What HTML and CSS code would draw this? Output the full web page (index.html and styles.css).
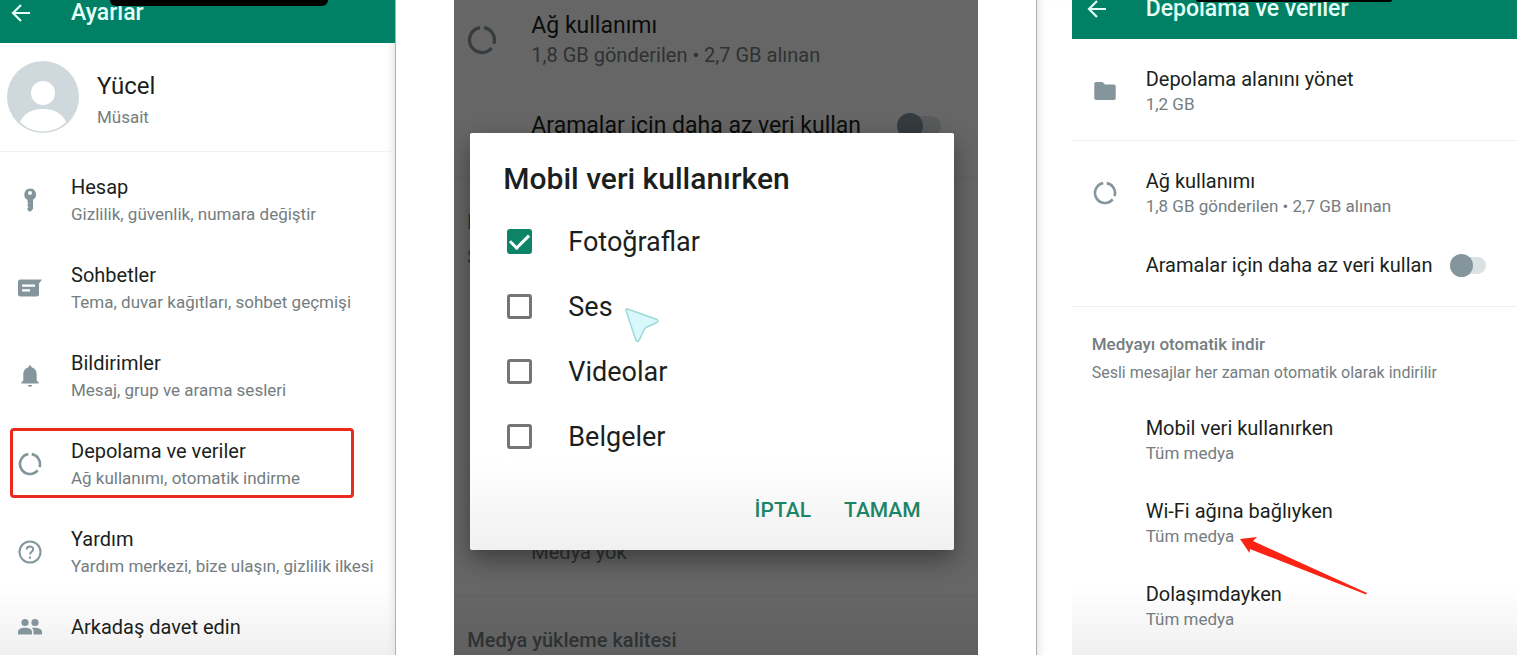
FILE: index.html
```
<!DOCTYPE html>
<html lang="tr">

<head>
    <meta charset="utf-8">
    <meta name="viewport" content="width=device-width, initial-scale=1.0">
    <title>Ayarlar</title>
    <link rel="stylesheet" href="styles.css">
</head>

<body>

    <svg class="symbols" aria-hidden="true">
        <symbol id="back" viewBox="0 0 24 24">
            <path d="M21 12H4M12 4l-8 8 8 8" fill="none" stroke="currentColor" stroke-width="2.2" />
        </symbol>
        <symbol id="data" viewBox="0 0 24 24">
            <path d="M13.74 2.15A10 10 0 0 1 21.51 15.09M19.66 18.43A10 10 0 1 1 10.26 2.15" fill="none" stroke="currentColor" stroke-width="2.6" />
        </symbol>
    </svg>

    <main class="screens">

        <section class="screen settings">
            <header class="bar">
                <button class="back" aria-label="Geri"><svg><use href="#back" /></svg></button>
                <h1>Ayarlar</h1>
                <span class="notch"></span>
            </header>

            <a class="profile" href="#">
                <svg class="avatar" viewBox="0 0 72 72">
                    <circle cx="36" cy="36" r="36" fill="#cfd8dc" />
                    <circle cx="36" cy="32" r="12" fill="#fff" />
                    <path d="M13 61C17 52 25 48 36 48s19 4 23 13C53 67 45 70.500 36 70.500S19 67 13 61z" fill="#fff" />
                </svg>
                <span class="who">
                    <strong>Yücel</strong>
                    <small>Müsait</small>
                </span>
            </a>

            <nav class="menu">
                <a class="item" href="#">
                    <svg class="icon" viewBox="0 0 24 24">
                        <path fill="currentColor" fill-rule="evenodd" d="M12 .5a6 6 0 0 1 3 11.200V21l-2.500 2.500h-1.500L9.500 22v-2l1-1-1-1v-1.500l1-1-1-1v-2.700A6 6 0 0 1 12 .5zM12 3a2 2 0 1 0 0 4 2 2 0 0 0 0-4z" />
                    </svg>
                    <span class="text"><b>Hesap</b><small>Gizlilik, güvenlik, numara değiştir</small></span>
                </a>
                <a class="item" href="#">
                    <svg class="icon" viewBox="0 0 24 24">
                        <path fill="currentColor" fill-rule="evenodd" d="M2.500 3.500H24L21 7.500V18a2.500 2.500 0 0 1-2.500 2.500h-16A2.500 2.500 0 0 1 0 18V6a2.500 2.500 0 0 1 2.500-2.500zM4 8.500v2.300h13V8.500zM4 13.200v2.300h8v-2.300z" />
                    </svg>
                    <span class="text"><b>Sohbetler</b><small>Tema, duvar kağıtları, sohbet geçmişi</small></span>
                </a>
                <a class="item" href="#">
                    <svg class="icon" viewBox="0 0 24 24">
                        <path fill="currentColor" d="M12 1.500c1 0 1.500.7 1.500 1.700 3.300.8 5.200 3.400 5.200 6.800v6.500l2 2V19.500H3.300V18.500l2-2V10c0-3.400 1.900-6 5.200-6.800 0-1 .5-1.700 1.500-1.700zM9.800 21h4.400c0 1.200-1 1.800-2.200 1.800S9.800 22.200 9.800 21z" />
                    </svg>
                    <span class="text"><b>Bildirimler</b><small>Mesaj, grup ve arama sesleri</small></span>
                </a>
                <a class="item marked" href="#">
                    <svg class="icon"><use href="#data" /></svg>
                    <span class="text"><b>Depolama ve veriler</b><small>Ağ kullanımı, otomatik indirme</small></span>
                </a>
                <a class="item" href="#">
                    <svg class="icon" viewBox="0 0 24 24" fill="none" stroke="currentColor" stroke-width="2">
                        <circle cx="12" cy="12" r="10.500" />
                        <path d="M8.800 9.500c0-4 6.400-4 6.400-.2 0 2.400-3.200 2.700-3.200 5.200M12 16.500v2.200" />
                    </svg>
                    <span class="text"><b>Yardım</b><small>Yardım merkezi, bize ulaşın, gizlilik ilkesi</small></span>
                </a>
                <a class="item" href="#">
                    <svg class="icon" viewBox="0 0 24 24" fill="currentColor">
                        <circle cx="7" cy="7.500" r="3.600" />
                        <circle cx="17" cy="7.500" r="3.600" />
                        <path d="M0 19.500v-2.700C0 14 3.500 12.800 7 12.800s7 1.200 7 4v2.700zM15.500 19.500v-3c0-1.400-.6-2.500-1.600-3.400 4-.8 10.100.3 10.100 3.700v2.700z" />
                    </svg>
                    <span class="text"><b>Arkadaş davet edin</b></span>
                </a>
            </nav>
        </section>

        <section class="screen dimmed">
            <div class="group">
                <div class="row">
                    <svg class="icon"><use href="#data" /></svg>
                    <p class="text"><b>Ağ kullanımı</b><small>1,8 GB gönderilen • 2,7 GB alınan</small></p>
                </div>
                <div class="row switch-row">
                    <label for="calls-back">Aramalar için daha az veri kullan</label>
                    <input class="switch" type="checkbox" id="calls-back">
                </div>
            </div>
            <div class="group">
                <h2>Medyayı otomatik indir</h2>
                <p class="note">Sesli mesajlar</p>
                <div class="row last">
                    <p class="text"><b>Dolaşımdayken</b><small>Medya yok</small></p>
                </div>
            </div>
            <div class="group">
                <h2>Medya yükleme kalitesi</h2>
            </div>

            <div class="backdrop"></div>

            <form class="dialog" role="dialog" aria-labelledby="dialog-title">
                <h2 id="dialog-title">Mobil veri kullanırken</h2>
                <label class="option"><input type="checkbox" checked>Fotoğraflar</label>
                <label class="option"><input type="checkbox">Ses</label>
                <label class="option"><input type="checkbox">Videolar</label>
                <label class="option"><input type="checkbox">Belgeler</label>
                <div class="actions">
                    <button type="button">İPTAL</button>
                    <button type="button">TAMAM</button>
                </div>
                <svg class="cursor" viewBox="0 0 36 36">
                    <path d="M2 3.500Q1.500 1.500 3.500 2L33 12.500Q35 14 33 15.500L23 20Q21 21 20 23L15 33.500Q13.500 35.500 12 33.500z" fill="#d8f8fc" stroke="#9fd8d8" stroke-width="1.500" />
                </svg>
            </form>
        </section>

        <section class="frame">
            <div class="screen storage">
                <header class="bar">
                    <button class="back" aria-label="Geri"><svg><use href="#back" /></svg></button>
                    <h1>Depolama ve veriler</h1>
                    <span class="notch"></span>
                </header>
                <div class="group">
                    <div class="row">
                        <svg class="icon" viewBox="0 0 24 24">
                            <path fill="currentColor" d="M3 3h6.500l2.500 2.500h9A1.700 1.700 0 0 1 22.700 7.200v12A1.700 1.700 0 0 1 21 21H3a1.700 1.700 0 0 1-1.700-1.700V4.700A1.700 1.700 0 0 1 3 3z" />
                        </svg>
                        <p class="text"><b>Depolama alanını yönet</b><small>1,2 GB</small></p>
                    </div>
                </div>
                <div class="group">
                    <div class="row">
                        <svg class="icon"><use href="#data" /></svg>
                        <p class="text"><b>Ağ kullanımı</b><small>1,8 GB gönderilen • 2,7 GB alınan</small></p>
                    </div>
                    <div class="row switch-row">
                        <label for="calls">Aramalar için daha az veri kullan</label>
                        <input class="switch" type="checkbox" id="calls">
                    </div>
                </div>
                <div class="group media">
                    <h2>Medyayı otomatik indir</h2>
                    <p class="note">Sesli mesajlar her zaman otomatik olarak indirilir</p>
                    <div class="row">
                        <p class="text"><b>Mobil veri kullanırken</b><small>Tüm medya</small></p>
                    </div>
                    <div class="row">
                        <p class="text"><b>Wi-Fi ağına bağlıyken</b><small>Tüm medya</small></p>
                        <svg class="pointer" viewBox="0 0 128 58">
                            <path d="M0 2L17 0 13 4 127 56 126 57.500 10 12 9.500 16z" fill="#fb2314" />
                        </svg>
                    </div>
                    <div class="row">
                        <p class="text"><b>Dolaşımdayken</b><small>Tüm medya</small></p>
                    </div>
                </div>
            </div>
        </section>

    </main>

</body>

</html>
```
FILE: styles.css
```
* {
    box-sizing: border-box;
}

body {
    margin: 0;
    background: #fff;
    color: #1b1f20;
    font-family: Roboto, "Liberation Sans", sans-serif;
}

h1, h2, p {
    margin: 0;
}

h1, h2 {
    font-weight: 500;
}

a {
    color: inherit;
    text-decoration: none;
}

button {
    padding: 0;
    border: 0;
    background: none;
    color: inherit;
    font-family: inherit;
}

.symbols {
    display: none;
}

.screens {
    display: grid;
    grid-template-columns: 396fr 523fr 481fr;
    column-gap: 58px;
    height: 100vh;
    overflow: hidden;
}

.screen {
    position: relative;
    overflow: hidden;
    background: linear-gradient(to top, #e8e8e8, #fff 100px);
}

.settings {
    border-right: 1px solid #b0b0b0;
    box-shadow: inset -8px 0 8px -6px #e4e4e4;
}

/* top bar */
.bar {
    position: relative;
    display: flex;
    align-items: center;
    height: 43px;
    padding: 0 0 17px 9px;
    background: #008065;
    color: #e4fff8;
}

.bar h1 {
    font-size: 23px;
    line-height: 26px;
}

.back {
    width: 24px;
    height: 24px;
    margin-right: 38px;
}

.back svg {
    display: block;
    width: 24px;
    height: 24px;
}

.notch {
    position: absolute;
    top: 0;
    left: 110px;
    width: 218px;
    height: 6px;
    border-radius: 0 0 20px 20px;
    background: #000;
}

/* profile and menu */
.profile {
    display: flex;
    align-items: center;
    gap: 18px;
    height: 109px;
    padding-left: 7px;
    border-bottom: 1px solid #f0f0f0;
}

.avatar {
    width: 72px;
    height: 72px;
}

.who {
    padding-top: 5px;
}

.who strong {
    display: block;
    margin-bottom: 4px;
    font-size: 24px;
    font-weight: 400;
    line-height: 30px;
}

small {
    display: block;
    color: #747d80;
    font-size: 17px;
    line-height: 24px;
}

b {
    display: block;
    font-size: 19px;
    font-weight: 400;
    line-height: 26px;
}

.menu {
    display: grid;
    gap: 18px;
    padding: 12px 10px;
}

.item {
    display: flex;
    align-items: center;
    gap: 29px;
    padding: 7px 0 5px 5px;
    border: 3px solid transparent;
    border-radius: 4px;
    white-space: nowrap;
}

.item b {
    font-size: 20px;
}

.item small {
    margin-top: 2px;
}

.marked {
    margin-right: 31px;
    border-color: #ea2a1f;
}

.icon {
    flex: none;
    width: 24px;
    height: 24px;
    color: #84959c;
}

/* storage screen */
.frame {
    padding-left: 35px;
    border-left: 1px solid #b0b0b0;
    box-shadow: inset 8px 0 8px -6px #e4e4e4;
}

.storage {
    height: 100%;
}

.storage .bar {
    height: 39px;
    padding: 0 0 22px 13px;
}

.storage .bar h1 {
    white-space: nowrap;
}

.storage .back {
    margin-right: 37px;
}

.storage .notch {
    left: 124px;
    width: 196px;
    height: 2px;
}

.storage b,
.switch-row {
    font-size: 20px;
    line-height: 26px;
}

.group {
    padding: 27px 20px 24px;
    border-bottom: 1px solid #f0f0f0;
}

.group:last-child {
    border: 0;
}

.row {
    position: relative;
    display: flex;
    align-items: center;
    gap: 29px;
    padding-left: 54px;
    white-space: nowrap;
}

.row:has(.icon) {
    padding-left: 1px;
}

.switch-row {
    gap: 18px;
    margin: 34px 0 4px;
}

.switch {
    position: relative;
    flex: none;
    width: 36px;
    height: 17px;
    margin: 0;
    border-radius: 12px;
    background: #dbe2e3;
    appearance: none;
}

.switch::before {
    content: "";
    position: absolute;
    top: -3px;
    left: 0;
    width: 23px;
    height: 23px;
    border-radius: 50%;
    background: #84959c;
}

.group h2 {
    color: #747d80;
    font-size: 17px;
    line-height: 24px;
}

.media {
    padding-top: 25px;
}

.note {
    margin: 5px 0 30px;
    color: #747d80;
    font-size: 16px;
    line-height: 24px;
    white-space: nowrap;
}

.media .row {
    margin-bottom: 33px;
}

.pointer {
    position: absolute;
    top: 39px;
    left: 148px;
    width: 128px;
    height: 58px;
}

/* screen behind the dialog */
.dimmed b,
.dimmed .switch-row {
    font-size: 23px;
    line-height: 30px;
}

.dimmed small,
.dimmed .note,
.dimmed .group h2 {
    font-size: 20px;
    line-height: 28px;
}

.dimmed .group {
    padding: 30px 13px 29px;
}

.dimmed .group:first-child {
    padding-top: 11px;
}

.dimmed .row {
    gap: 34px;
    padding-left: 64px;
}

.dimmed .row:has(.icon) {
    padding-left: 0;
}

.dimmed .icon {
    width: 30px;
    height: 30px;
}

.dimmed .switch-row {
    gap: 36px;
    margin: 42px 0 7px;
}

.dimmed .note {
    margin: 7px 0 0;
}

.dimmed .last {
    margin-top: 237px;
}

.dimmed .switch {
    width: 44px;
    height: 20px;
}

.dimmed .switch::before {
    width: 26px;
    height: 26px;
}

.backdrop {
    position: absolute;
    inset: 0;
    background: rgba(0, 0, 0, .6);
}

/* dialog */
.dialog {
    position: absolute;
    top: 133px;
    left: 16px;
    right: 24px;
    padding: 28px 33px 27px;
    border-radius: 2px;
    background: linear-gradient(to top, #f0f0f0, #fff 90px);
    box-shadow: 0 10px 24px rgba(0, 0, 0, .4);
}

.dialog h2 {
    margin-bottom: 12px;
    font-size: 30px;
    line-height: 36px;
}

.option {
    display: flex;
    align-items: center;
    gap: 36px;
    height: 65px;
    padding-left: 4px;
    font-size: 27px;
}

.option input {
    display: grid;
    place-items: center;
    width: 25px;
    height: 25px;
    margin: 0;
    border: 3px solid #757575;
    border-radius: 3px;
    appearance: none;
}

.option input:checked {
    border-color: #0b8468;
    background: #0b8468;
}

.option input:checked::before {
    content: "";
    width: 8px;
    height: 16px;
    border: solid #fff;
    border-width: 0 3px 3px 0;
    transform: translateY(-2px) rotate(45deg);
}

.actions {
    display: flex;
    justify-content: flex-end;
    gap: 33px;
    margin-top: 28px;
}

.actions button {
    color: #1c8468;
    font-size: 21px;
    font-weight: 500;
    line-height: 26px;
}

.cursor {
    position: absolute;
    top: 174px;
    left: 154px;
    width: 36px;
    height: 36px;
}
```
